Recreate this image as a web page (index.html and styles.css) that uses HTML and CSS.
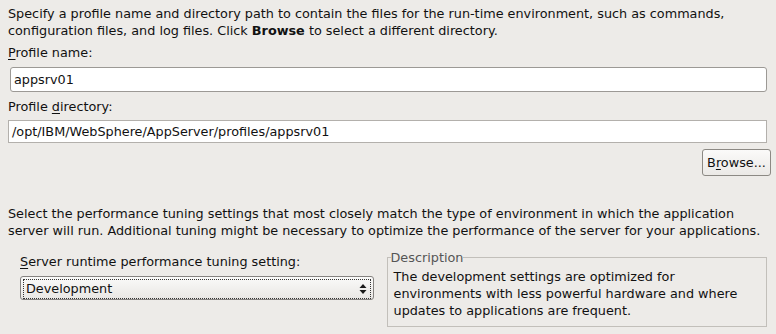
FILE: index.html
```html
<!DOCTYPE html>
<html>
<head>
<meta charset="utf-8">
<link rel="stylesheet" href="styles.css">
</head>
<body>
<div class="page">
  <p class="intro">Specify a profile name and directory path to contain the files for the run-time environment, such as commands, configuration files, and log files. Click <b>Browse</b> to select a different directory.</p>
  <div class="label first"><u>P</u>rofile name:</div>
  <div class="entry rounded">appsrv01</div>
  <div class="label"><span>Profile </span><u>d</u>irectory:</div>
  <div class="entry square">/opt/IBM/WebSphere/AppServer/profiles/appsrv01</div>
  <div class="btnrow"><div class="button">B<u>r</u>owse...</div></div>
  <p class="intro second">Select the performance tuning settings that most closely match the type of environment in which the application server will run. Additional tuning might be necessary to optimize the performance of the server for your applications.</p>
  <div class="tuning">
    <div class="left">
      <div class="label"><u>S</u>erver runtime performance tuning setting:</div>
      <div class="combo">
        <div class="focus">
          <span class="value">Development</span>
          <svg class="arrows" width="8" height="12" viewBox="0 0 8 12"><path d="M4 1 L7.5 5 L0.5 5 Z M0.5 7 L7.5 7 L4 11 Z" fill="#1a1a1a"/></svg>
        </div>
      </div>
    </div>
    <fieldset class="desc">
      <legend>Description</legend>
      <div class="desctext">The development settings are optimized for environments with less powerful hardware and where updates to applications are frequent.</div>
    </fieldset>
  </div>
</div>
</body>
</html>
```
FILE: styles.css
```css
html, body {
  margin: 0;
  padding: 0;
  background: #edebe8;
}
body {
  font-family: "DejaVu Sans", "Liberation Sans", sans-serif;
  font-size: 12.8px;
  line-height: 17px;
  color: #111;
  width: 776px;
  height: 334px;
  overflow: hidden;
}
.page {
  padding: 5px 9px 0 8px;
}
.intro {
  margin: 0;
}
.intro b {
  font-weight: bold;
}
.label {
  margin-top: 6px;
}
.label.first {
  margin-top: 5px;
}
u {
  text-decoration: underline;
  text-underline-offset: 2px;
}
.entry {
  margin-top: 6px;
  background: #fff;
  border: 1px solid #a3a09c;
  box-sizing: border-box;
  white-space: nowrap;
}
.entry.rounded {
  margin-left: 2px;
  height: 25px;
  line-height: 23px;
  padding-left: 3px;
  border-radius: 3px;
  border-color: #9c9995;
}
.entry.square {
  margin-top: 5px;
  height: 23px;
  line-height: 21px;
  padding-left: 3px;
  border-color: #b3b0ac;
}
.btnrow {
  display: flex;
  justify-content: flex-end;
  margin-top: 6px;
  margin-right: -4px;
}
.button {
  box-sizing: border-box;
  width: 69px;
  height: 27px;
  line-height: 25px;
  text-align: center;
  border: 1px solid #8c8984;
  border-radius: 3px;
  background: linear-gradient(#fbfaf9, #ebe9e6);
}
.intro.second {
  margin-top: 29px;
}
.tuning {
  display: flex;
  margin-top: 11px;
  padding-left: 12px;
  gap: 13px;
}
.left {
  width: 354px;
  padding-top: 3px;
}
.left .label {
  margin-top: 0;
}
.combo {
  margin-top: 6px;
  box-sizing: border-box;
  height: 24px;
  border: 1px solid #858280;
  border-radius: 3px;
  background: linear-gradient(#fafaf9, #e9e7e4);
  padding: 2px;
}
.focus {
  height: 18px;
  border: 1px dotted #333;
  display: flex;
  align-items: center;
  justify-content: space-between;
  padding: 0 3px 0 2px;
}
.value {
  line-height: 18px;
}
.arrows {
  display: block;
}
.desc {
  width: 381px;
  box-sizing: border-box;
  margin: 0;
  border: 1px solid #c2bfba;
  padding: 3px 6px 7px 6px;
}
.desc legend {
  color: #555;
  padding: 0;
  margin-left: -3px;
  line-height: 15px;
}
.desctext {
  line-height: 17px;
}
```
